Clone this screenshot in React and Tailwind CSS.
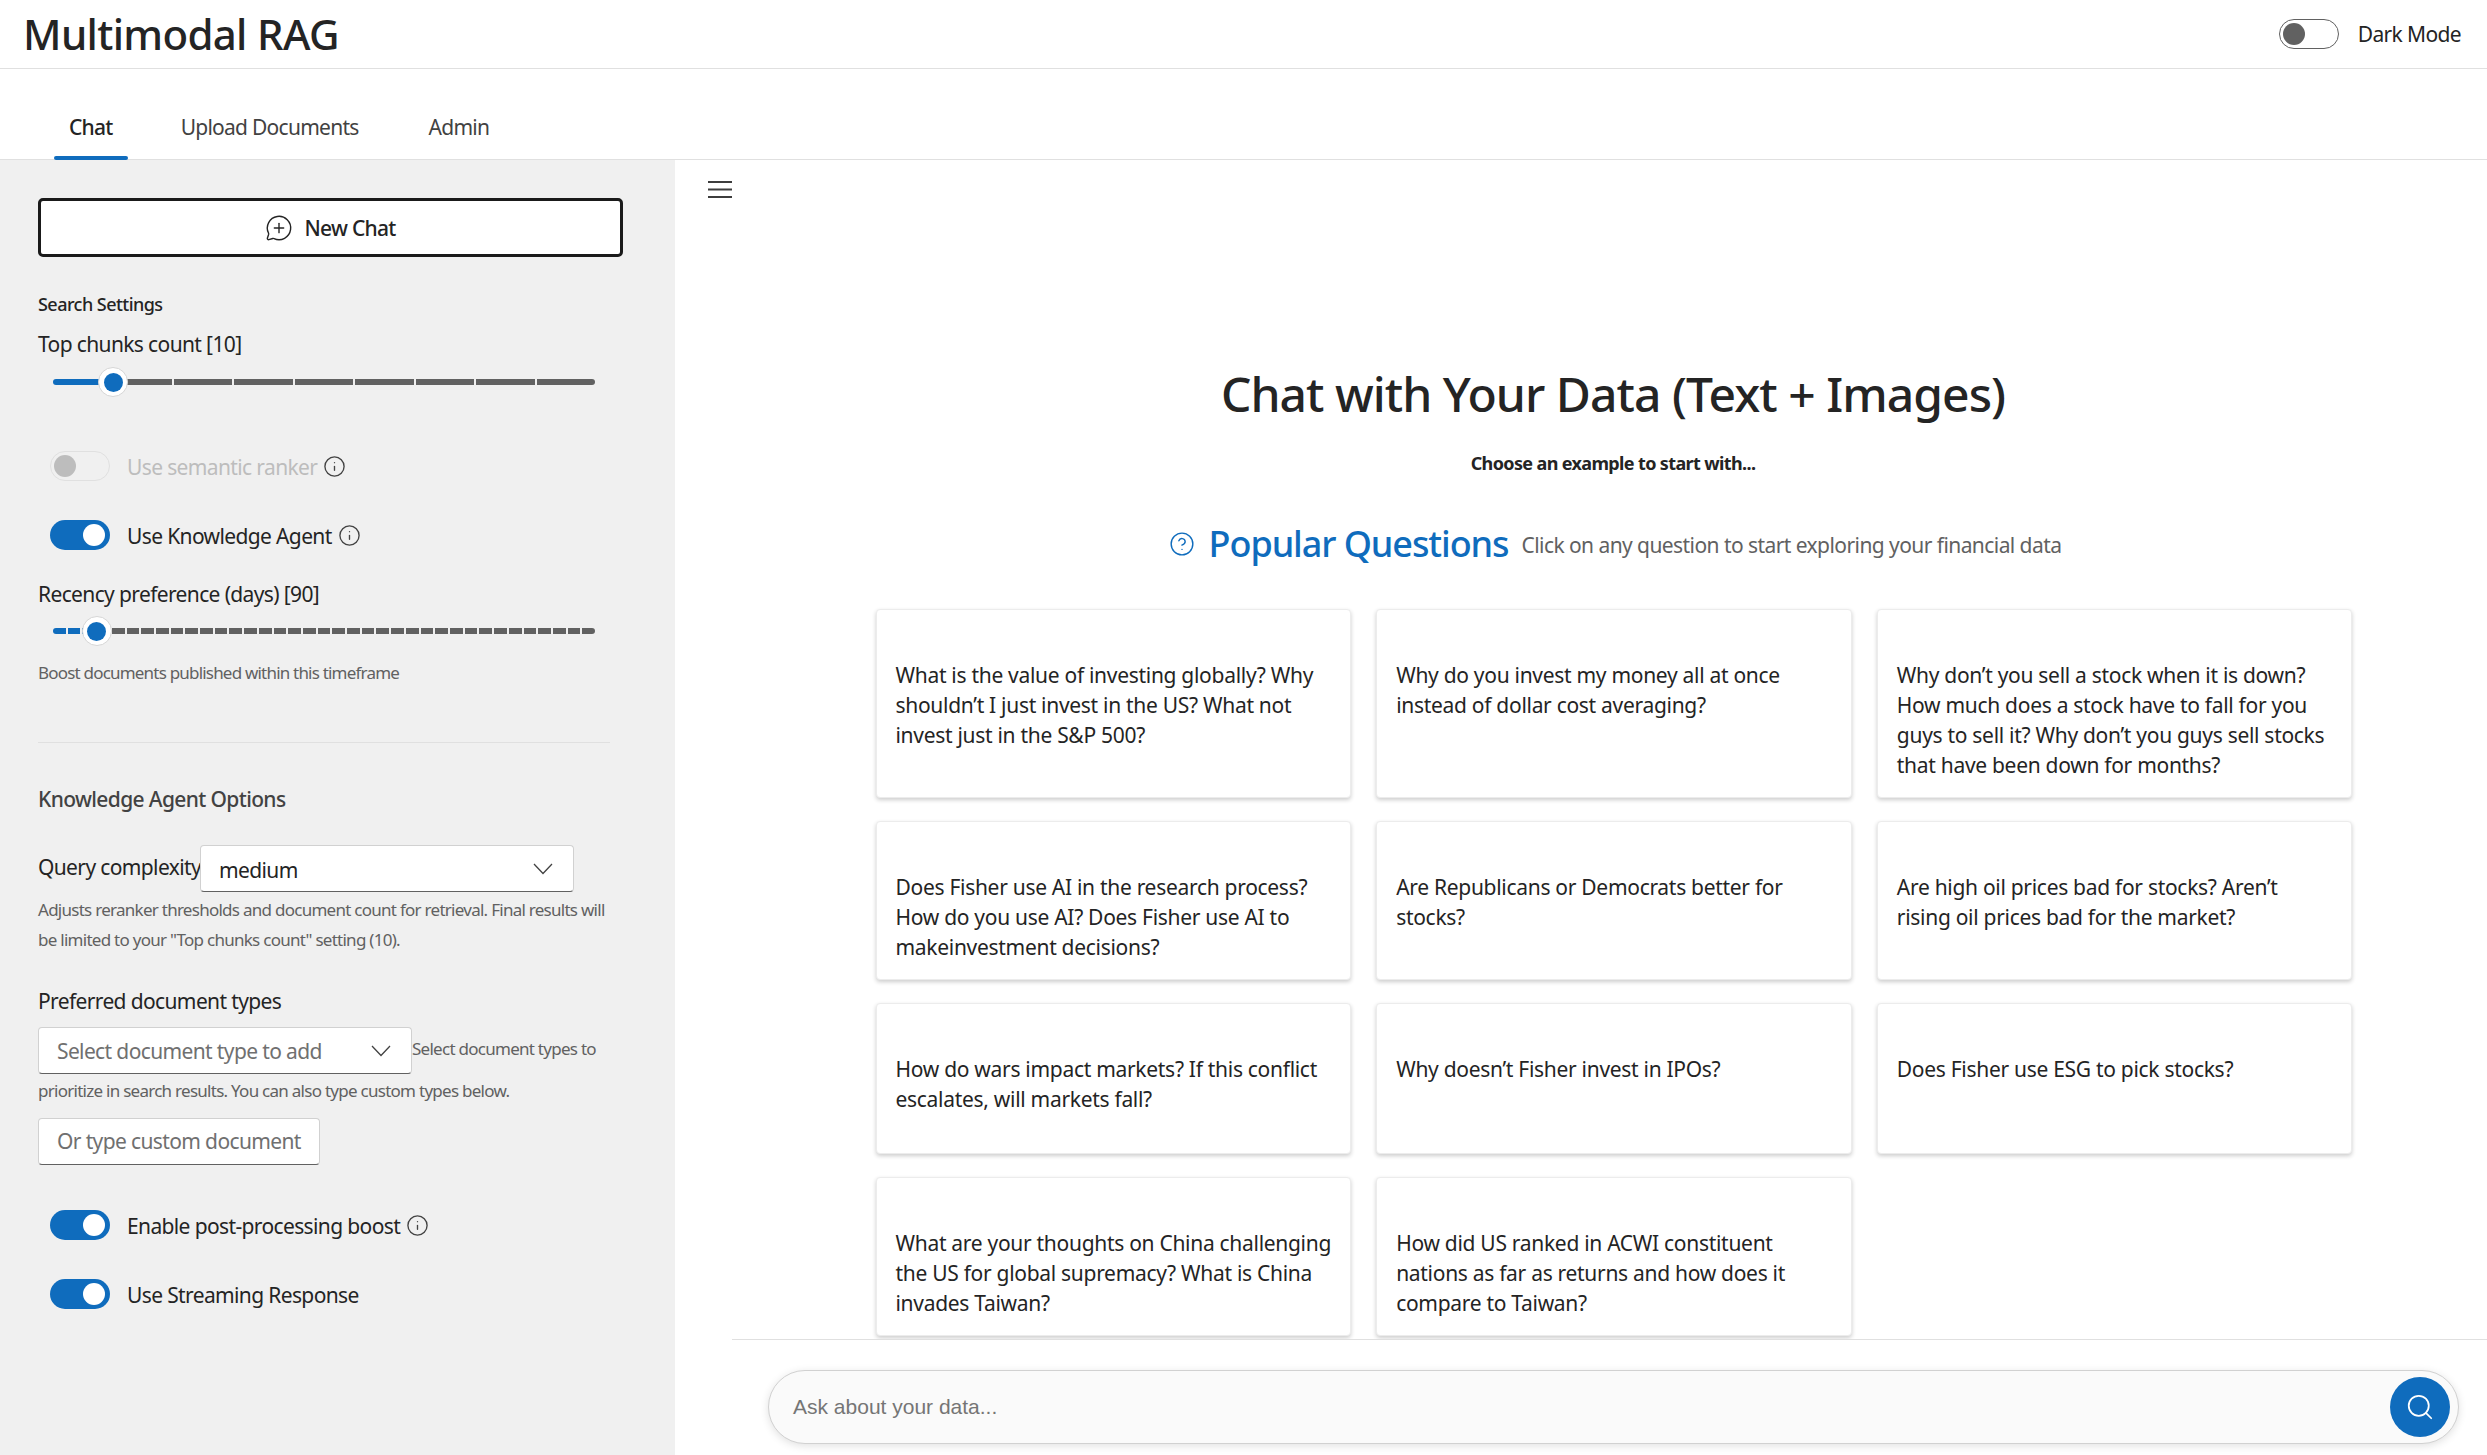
import React from 'react'
import { Info, CircleHelp, Search, MessageCirclePlus } from 'lucide-react'

const questions = [
  "What is the value of investing globally? Why shouldn’t I just invest in the US? What not invest just in the S&P 500?",
  "Why do you invest my money all at once instead of dollar cost averaging?",
  "Why don’t you sell a stock when it is down? How much does a stock have to fall for you guys to sell it? Why don’t you guys sell stocks that have been down for months?",
  "Does Fisher use AI in the research process? How do you use AI? Does Fisher use AI to makeinvestment decisions?",
  "Are Republicans or Democrats better for stocks?",
  "Are high oil prices bad for stocks? Aren’t rising oil prices bad for the market?",
  "How do wars impact markets? If this conflict escalates, will markets fall?",
  "Why doesn’t Fisher invest in IPOs?",
  "Does Fisher use ESG to pick stocks?",
  "What are your thoughts on China challenging the US for global supremacy? What is China invades Taiwan?",
  "How did US ranked in ACWI constituent nations as far as returns and how does it compare to Taiwan?",
]

const Chevron = () => (
  <svg width="20" height="12" viewBox="0 0 20 12" fill="none" stroke="#424242" strokeWidth="1.3" className="shrink-0">
    <path d="M1 1l9 9.5L19 1" />
  </svg>
)

const Slider = ({ steps, filled }) => {
  const left = (filled / steps) * 542
  return (
    <div className="relative ml-[15px] w-[542px] h-[30px] flex items-center gap-[2px]">
      {Array.from({ length: steps }).map((_, i) => (
        <div key={i} className={`flex-1 h-[6px] ${i < filled ? 'bg-[#0f6cbd]' : 'bg-[#616161]'} ${i === 0 ? 'rounded-l-full' : ''} ${i === steps - 1 ? 'rounded-r-full' : ''}`} />
      ))}
      <div className="absolute top-0 w-[30px] h-[30px] rounded-full bg-white border border-[#d6d6d6] flex items-center justify-center" style={{ left: left - 15 }}>
        <div className="w-[19px] h-[19px] rounded-full bg-[#0f6cbd]" />
      </div>
    </div>
  )
}

const Toggle = ({ label, info, disabled }) => (
  <div className="ml-[12px] flex items-center h-[30px]">
    {disabled ? (
      <div className="w-[60px] h-[30px] rounded-full border border-[#e0e0e0] flex items-center pl-[3px]">
        <div className="w-[22px] h-[22px] rounded-full bg-[#bdbdbd]" />
      </div>
    ) : (
      <div className="w-[60px] h-[30px] rounded-full bg-[#0f6cbd] flex items-center justify-end pr-[5px]">
        <div className="w-[22px] h-[22px] rounded-full bg-white" />
      </div>
    )}
    <span className={`ml-[17px] mt-[1px] text-[21px] leading-[28px] tracking-[-0.03em] ${disabled ? 'text-[#bdbdbd]' : 'text-[#242424]'}`}>{label}</span>
    {info && <Info className="ml-[6px] w-[23px] h-[23px] text-[#424242]" strokeWidth={1.4} />}
  </div>
)

const App = () => {
  return (
    <div className="w-full h-screen flex flex-col overflow-hidden bg-white text-[#242424] font-['Noto_Sans',sans-serif]">
      {/* Header */}
      <header className="h-[69px] shrink-0 border-b border-[#e0e0e0] flex items-center justify-between pl-[23px] pr-[26px]">
        <h1 className="text-[42px] leading-[56px] font-medium tracking-[-0.016em]">Multimodal RAG</h1>
        <div className="flex items-center">
          <div className="w-[60px] h-[30px] rounded-full border border-[#616161] flex items-center pl-[3px]">
            <div className="w-[22px] h-[22px] rounded-full bg-[#616161]" />
          </div>
          <span className="ml-[19px] mt-[2px] text-[21px] tracking-[-0.03em]">Dark Mode</span>
        </div>
      </header>

      {/* Tabs */}
      <nav className="h-[91px] shrink-0 border-b border-[#e0e0e0] flex items-end pl-[54px] gap-[38px]">
        <div className="relative px-[15px] pb-[18px] text-[21px] leading-[28px] font-medium tracking-[-0.035em]">
          Chat
          <div className="absolute left-0 right-0 bottom-[-1px] h-[4px] rounded-full bg-[#0f6cbd]" />
        </div>
        <div className="px-[15px] pb-[18px] text-[21px] leading-[28px] text-[#424242] tracking-[-0.035em]">Upload Documents</div>
        <div className="ml-[2px] px-[15px] pb-[18px] text-[21px] leading-[28px] text-[#424242] tracking-[-0.035em]">Admin</div>
      </nav>

      <div className="flex-1 flex min-h-0">
        {/* Sidebar */}
        <aside className="w-[675px] shrink-0 bg-[#f0f0f0] pl-[38px] pt-[38px]">
          <button className="w-[585px] h-[59px] bg-white border-[3px] border-[#1a1a1a] rounded-[5px] flex items-center justify-center">
            <MessageCirclePlus className="w-[28px] h-[28px] text-[#242424]" strokeWidth={1.2} />
            <span className="ml-[11px] mt-[2px] text-[21px] font-medium tracking-[-0.035em]">New Chat</span>
          </button>

          <div className="mt-[35px] text-[18px] leading-[24px] font-medium tracking-[-0.03em]">Search Settings</div>
          <div className="mt-[14px] text-[21px] leading-[28px] tracking-[-0.03em] text-[#242424]">Top chunks count [10]</div>
          <div className="mt-[9px]"><Slider steps={9} filled={1} /></div>

          <div className="mt-[54px]"><Toggle label="Use semantic ranker" info disabled /></div>
          <div className="mt-[39px]"><Toggle label="Use Knowledge Agent" info /></div>

          <div className="mt-[30px] text-[21px] leading-[28px] tracking-[-0.03em]">Recency preference (days) [90]</div>
          <div className="mt-[8px]"><Slider steps={37} filled={3} /></div>
          <div className="mt-[15px] text-[17px] leading-[24px] text-[#616161] tracking-[-0.047em]">Boost documents published within this timeframe</div>

          <div className="mt-[57px] w-[572px] h-px bg-[#e0e0e0]" />

          <div className="mt-[42px] text-[21px] leading-[28px] font-medium text-[#424242] tracking-[-0.03em]">Knowledge Agent Options</div>

          <div className="mt-[32px] flex items-center">
            <span className="w-[162px] text-[21px] leading-[28px] tracking-[-0.03em] whitespace-nowrap -mt-[4px]">Query complexity</span>
            <div className="w-[374px] h-[47px] bg-white border border-[#d1d1d1] border-b-[#616161] rounded-[4px] flex items-center justify-between pl-[18px] pr-[20px]">
              <span className="text-[21px] tracking-[-0.03em] mt-[4px]">medium</span>
              <Chevron />
            </div>
          </div>
          <p className="mt-[3px] w-[574px] text-[17px] leading-[30px] text-[#616161] tracking-[-0.043em]">
            Adjusts reranker thresholds and document count for retrieval. Final results will be limited to your "Top chunks count" setting (10).
          </p>

          <div className="mt-[32px] text-[21px] leading-[28px] tracking-[-0.03em]">Preferred document types</div>

          <div className="mt-[12px] w-[574px] text-[17px] leading-[33px] text-[#616161] tracking-[-0.043em]">
            <span className="inline-flex align-middle w-[374px] h-[47px] bg-white border border-[#d1d1d1] border-b-[#616161] rounded-[4px] items-center justify-between pl-[18px] pr-[20px]">
              <span className="text-[21px] leading-[28px] mt-[1px] text-[#707070] tracking-[-0.03em]">Select document type to add</span>
              <Chevron />
            </span>
            Select document types to prioritize in search results. You can also type custom types below.
          </div>

          <div className="mt-[11px] w-[282px] h-[47px] bg-white border border-[#d1d1d1] border-b-[#616161] rounded-[4px] flex items-center pl-[18px] text-[21px] text-[#707070] tracking-[-0.03em] whitespace-nowrap">
            Or type custom document
          </div>

          <div className="mt-[45px]"><Toggle label="Enable post-processing boost" info /></div>
          <div className="mt-[39px]"><Toggle label="Use Streaming Response" /></div>
        </aside>

        {/* Main */}
        <main className="flex-1 min-w-0 flex flex-col">
          <div className="flex-1 min-h-0 overflow-hidden relative">
            <div className="pl-[33px] pt-[21px]">
              <svg width="24" height="17" viewBox="0 0 24 17" stroke="#3d3d3d" strokeWidth="2">
                <path d="M0 1h24M0 8.5h24M0 16h24" />
              </svg>
            </div>
            <div className="ml-[64px] flex flex-col items-center">
              <h2 className="mt-[164px] text-[48px] leading-[64px] font-medium tracking-[-0.02em] whitespace-nowrap">Chat with Your Data (Text + Images)</h2>
              <div className="mt-[25px] text-[18px] leading-[24px] font-bold tracking-[-0.035em]">Choose an example to start with...</div>
              <div className="mt-[45px] ml-[4px] h-[48px] flex items-center">
                <CircleHelp className="w-[26px] h-[26px] text-[#0f6cbd]" strokeWidth={1.3} />
                <span className="ml-[14px] text-[36px] font-medium text-[#0f6cbd] tracking-[-0.03em]">Popular Questions</span>
                <span className="ml-[13px] mt-[3px] text-[21px] text-[#616161] tracking-[-0.027em]">Click on any question to start exploring your financial data</span>
              </div>
              <div className="mt-[41px] ml-[2px] w-[1477px] grid grid-cols-3 gap-x-[25px] gap-y-[23px]">
                {questions.map((q) => (
                  <div key={q} className="min-h-[151px] bg-white rounded-[4px] border border-[#ececec] shadow-[0_2px_4px_rgba(0,0,0,0.2)] pt-[50px] pb-[17px] pl-[19px] pr-[16px] text-[21px] leading-[30px] tracking-[-0.014em]">
                    {q}
                  </div>
                ))}
              </div>
            </div>
          </div>

          {/* Chat input */}
          <div className="h-[116px] shrink-0 ml-[57px] bg-white border-t border-[#e0e0e0] pt-[30px] pl-[36px] pr-[28px]">
            <div className="h-[74px] rounded-full bg-[#fafafa] border border-[#d1d1d1] shadow-[0_2px_8px_rgba(0,0,0,0.12)] flex items-center justify-between pl-[24px] pr-[8px]">
              <span className="text-[21px] text-[#757575] font-['Liberation_Sans',sans-serif]">Ask about your data...</span>
              <div className="w-[60px] h-[60px] rounded-full bg-[#0f6cbd] flex items-center justify-center">
                <Search className="w-[30px] h-[30px] text-white" strokeWidth={1.4} />
              </div>
            </div>
          </div>
        </main>
      </div>
    </div>
  )
}

export default App
